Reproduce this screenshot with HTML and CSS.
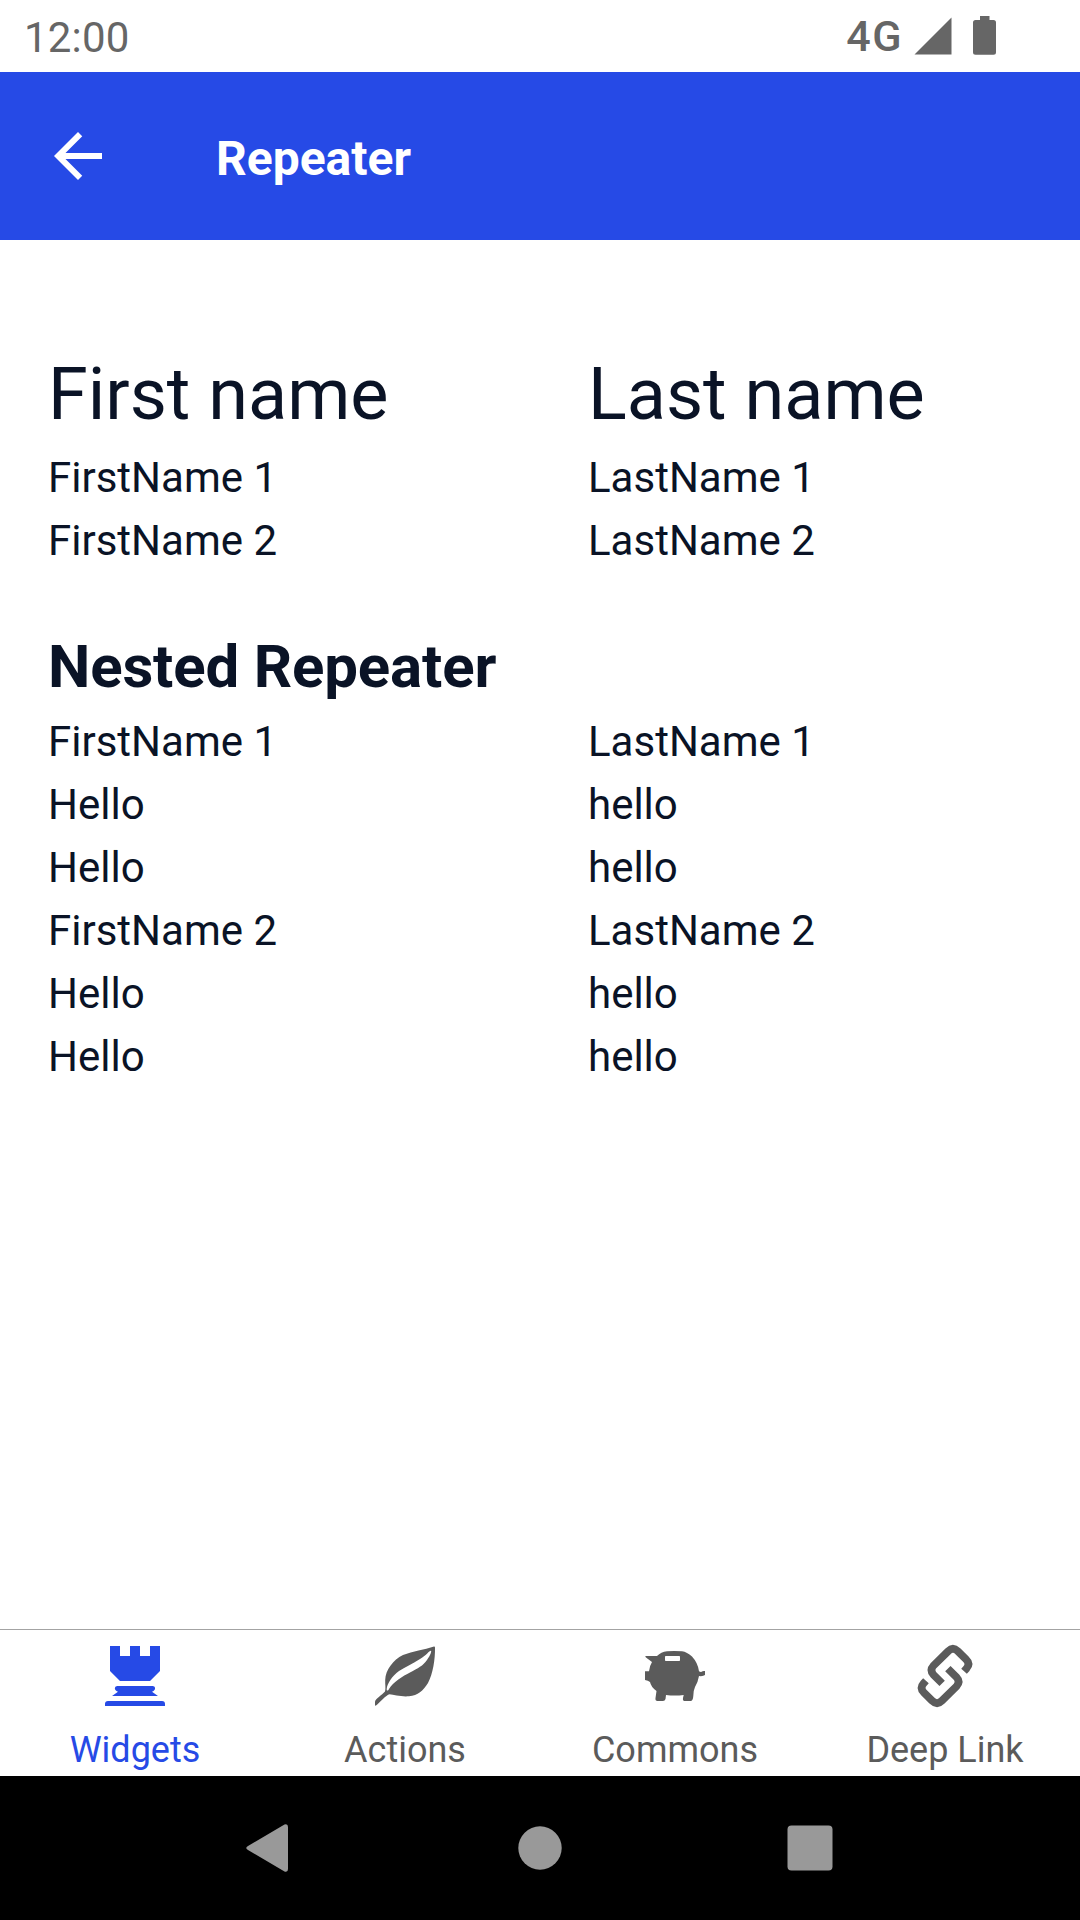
FILE: index.html
```html
<!DOCTYPE html>
<html lang="en">
<head>
<meta charset="utf-8">
<title>Repeater</title>
<link rel="stylesheet" href="styles.css">
</head>
<body>
<div class="screen">
  <div class="status">
    <span class="clock">12:00</span>
    <span class="network">4G</span>
    <svg class="signal" viewBox="0 0 38 38"><path d="M0.5 37.5H37.5V0.5Z"/></svg>
    <svg class="battery" viewBox="0 0 23 39"><path d="M7 0h9.5v4H20.500q2.500 0 2.500 2.500V36.300q0 2.500-2.500 2.500H2.500q-2.500 0-2.500-2.500V6.500q0-2.500 2.500-2.500H7Z"/></svg>
  </div>
  <header class="appbar">
    <svg class="back" viewBox="0 0 24 24"><path d="M20 11H7.830l5.590-5.590L12 4l-8 8 8 8 1.410-1.410L7.830 13H20v-2z"/></svg>
    <h1 class="title">Repeater</h1>
  </header>
  <main class="content">
    <section class="grid">
      <h2 class="column-title">First name</h2><h2 class="column-title">Last name</h2>
      <p>FirstName 1</p><p>LastName 1</p>
      <p>FirstName 2</p><p>LastName 2</p>
    </section>
    <h2 class="section-title">Nested Repeater</h2>
    <section class="grid">
      <p>FirstName 1</p><p>LastName 1</p>
      <p>Hello</p><p>hello</p>
      <p>Hello</p><p>hello</p>
      <p>FirstName 2</p><p>LastName 2</p>
      <p>Hello</p><p>hello</p>
      <p>Hello</p><p>hello</p>
    </section>
  </main>
  <nav class="tabs">
    <a class="tab active">
      <svg class="tab-icon" viewBox="0 0 60 60"><path d="M5 0H15V10H25V0H35V10H45V0H55V25L45 35H15L5 25ZM12.500 40H47.500C50.500 40 51 43.500 48.500 45L47 45.700L53 50H7L13 45.700L11.500 45C9 43.500 9.500 40 12.500 40ZM3 55H57Q60 55 60 58V60H0V58Q0 55 3 55Z"/></svg>
      <span>Widgets</span>
    </a>
    <a class="tab">
      <svg class="tab-icon" viewBox="0 0 60 60"><path fill-rule="evenodd" d="M59 .600Q60 .500 60 1.500C60.200 13 58 28 53 37C48 45 43 49.500 34 50.300C26 50.900 19 49 14.500 48.300C11 49 5 56.500 1 59.600Q0 60 0 59V56C0 53 7 49 10 45.500C11 42 10 39 10.200 34C10.500 24 18 14 28 9C38 5 49 4 59 .600ZM56 4.700C54 4.500 52 9 45 13C37 18 30 21 24 25C17 30 12 38 11.700 43C11.500 45 13 45 14 43C18 36 28 30 35 26.500C43 22 48 20 52 14C54 11 57 6 56 4.700Z"/></svg>
      <span>Actions</span>
    </a>
    <a class="tab">
      <svg class="tab-icon" viewBox="0 0 60 60"><path fill-rule="evenodd" d="M.500 10H12Q16 6 22 5.300Q29 4.700 37 5.300Q42 6 47 10.500Q53 17 54 25.300Q56 26.800 57.500 25.300Q58 24.800 60 25V29Q58 30.500 54 30Q53 36 50 41Q48.500 44 48.300 50Q48 55 45.500 55H39.500Q37.500 55 38 52L38.700 49Q30 50 21 49L20.500 53Q20 55 18 55H12.500Q10 55 10.500 52L11.500 45Q6 41 5 36Q3 34.500 0 34V25.300H4Q4.500 20 7 16L1 11.500Q0 10.500 .500 10ZM20.800 10Q20 10 20 10.800V14.200Q20 15 20.800 15H34.200Q35 15 35 14.200V10.800Q35 10 34.200 10Z"/></svg>
      <span>Commons</span>
    </a>
    <a class="tab">
      <svg class="tab-icon link" viewBox="-1.500 -1.500 63 63"><path d="M50 25L52.500 22.300Q57 17.300 52 12.500L43.500 4Q38.300-1 33.300 4L18 19Q13.500 24 18 28.700L27 37.700"/><path transform="rotate(180 30 30)" d="M50 25L52.500 22.300Q57 17.300 52 12.500L43.500 4Q38.300-1 33.300 4L18 19Q13.500 24 18 28.700L27 37.700"/></svg>
      <span>Deep Link</span>
    </a>
  </nav>
  <footer class="system">
    <svg class="key" viewBox="0 0 48 48"><path d="M2 22L38.500 .600Q42 -.500 42 3V45Q42 48.500 38.500 47.400L2 26Q-1.500 24 2 22Z"/></svg>
    <svg class="key" viewBox="0 0 48 48"><circle cx="24" cy="24" r="21.700"/></svg>
    <svg class="key" viewBox="0 0 48 48"><rect x="1.500" y="1.500" width="45" height="45" rx="4"/></svg>
  </footer>
</div>
</body>
</html>
```
FILE: styles.css
```css
body { margin: 0; }
h1, h2, p { margin: 0; font-weight: 400; }
svg { display: block; flex: none; }
.screen {
  width: 1080px;
  height: 1920px;
  display: flex;
  flex-direction: column;
  background: #fff;
  color: #0a1326;
  font-family: Roboto, sans-serif;
  font-size: 42px;
  line-height: 63px;
}
.status {
  box-sizing: border-box;
  height: 72px;
  padding: 0 84px 0 24px;
  display: flex;
  color: #666;
  fill: #666;
}
.clock { margin-top: 6px; letter-spacing: 0.2px; }
.network { margin: 5px 11px 0 auto; font-size: 43px; font-weight: 500; letter-spacing: 1.5px; }
.signal { width: 38px; height: 38px; margin: 16.5px 21px 0 0; }
.battery { width: 23px; height: 39px; margin-top: 16px; }
.appbar {
  box-sizing: border-box;
  height: 168px;
  padding-left: 42px;
  display: flex;
  align-items: center;
  background: #264ae6;
  color: #fff;
  fill: #fff;
}
.back { width: 72px; height: 72px; }
.title { margin: 4px 0 0 102px; font-size: 48px; font-weight: 700; }
.content { flex: 1; padding: 104px 0 0 48px; }
.grid { display: grid; grid-template-columns: 540px 1fr; }
.column-title { font-size: 72px; line-height: 102px; }
.section-title { margin-top: 53px; padding-bottom: 1px; font-size: 60px; line-height: 84px; font-weight: 700; letter-spacing: -0.17px; }
.tabs {
  box-sizing: border-box;
  height: 147px;
  border-top: 1px solid #a3a3a3;
  display: grid;
  grid-template-columns: repeat(4, 1fr);
  color: #5b5b5b;
  fill: #5b5b5b;
  font-size: 36px;
  line-height: 44px;
}
.tab { display: flex; flex-direction: column; align-items: center; padding-top: 16px; gap: 22px; }
.active { color: #264ae6; fill: #264ae6; }
.tab-icon { width: 60px; height: 60px; overflow: visible; }
.link { fill: none; stroke: #5b5b5b; stroke-width: 8; }
.system {
  height: 144px;
  display: flex;
  justify-content: center;
  align-items: center;
  gap: 222px;
  background: #000;
  fill: #999;
}
.key { width: 48px; height: 48px; }
```
